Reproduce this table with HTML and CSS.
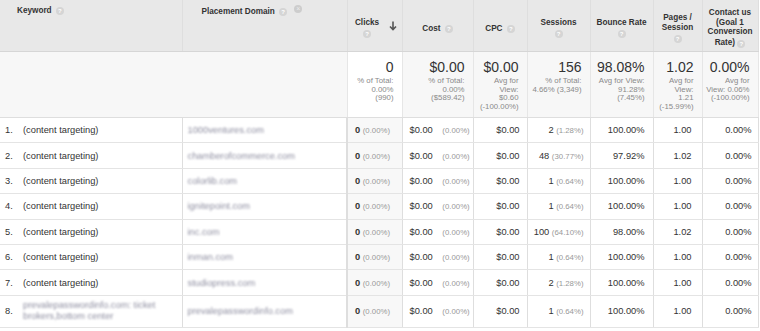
FILE: index.html
```html
<!DOCTYPE html>
<html>
<head>
<meta charset="utf-8">
<link rel="stylesheet" href="styles.css">
</head>
<body>
<table class="report">
  <colgroup>
    <col class="c-kw"><col class="c-dom"><col class="c-clicks"><col class="c-cost"><col class="c-cpc"><col class="c-sess"><col class="c-bounce"><col class="c-pages"><col class="c-conv">
  </colgroup>
  <thead>
    <tr class="head">
      <th class="dim kw">Keyword <span class="help">?</span></th>
      <th class="dim dom">Placement Domain <span class="help">?</span> <span class="remove">×</span></th>
      <th class="metric sorted">
        <div class="sortwrap">
          <div class="lbl">Clicks<br><span class="help">?</span></div>
          <svg class="arrow" width="8" height="10" viewBox="0 0 8 10"><path d="M4 0.5V8.5M1 5.5L4 8.5L7 5.5" fill="none" stroke="#555" stroke-width="1.6"/></svg>
        </div>
      </th>
      <th class="metric">Cost <span class="help">?</span></th>
      <th class="metric">CPC <span class="help">?</span></th>
      <th class="metric">Sessions<br><span class="help">?</span></th>
      <th class="metric">Bounce Rate<br><span class="help">?</span></th>
      <th class="metric">Pages /<br>Session<br><span class="help">?</span></th>
      <th class="metric">Contact us<br>(Goal 1<br>Conversion<br>Rate) <span class="help">?</span></th>
    </tr>
  </thead>
  <tbody>
    <tr class="summary">
      <td colspan="2"></td>
      <td class="sorted"><div class="big">0</div><div class="sub">% of Total:<br>0.00%<br>(990)</div></td>
      <td><div class="big">$0.00</div><div class="sub">% of Total:<br>0.00%<br>($589.42)</div></td>
      <td><div class="big">$0.00</div><div class="sub">Avg for<br>View:<br>$0.60<br>(-100.00%)</div></td>
      <td><div class="big">156</div><div class="sub">% of Total:<br>4.66% (3,349)</div></td>
      <td><div class="big">98.08%</div><div class="sub">Avg for View:<br>91.28%<br>(7.45%)</div></td>
      <td><div class="big">1.02</div><div class="sub">Avg for<br>View:<br>1.21<br>(-15.99%)</div></td>
      <td><div class="big">0.00%</div><div class="sub">Avg for<br>View: 0.06%<br>(-100.00%)</div></td>
    </tr>
    <tr class="row">
      <td class="kw"><span class="num">1.</span>(content targeting)</td>
      <td class="dom"><span class="blur">1000ventures.com</span></td>
      <td class="clicks"><b>0</b> <span class="pct">(0.00%)</span></td>
      <td class="cost">$0.00 <span class="pct">(0.00%)</span></td>
      <td class="r cpc">$0.00</td>
      <td class="r sess">2 <span class="pct">(1.28%)</span></td>
      <td class="r bounce">100.00%</td>
      <td class="r pages">1.00</td>
      <td class="r conv">0.00%</td>
    </tr>
    <tr class="row">
      <td class="kw"><span class="num">2.</span>(content targeting)</td>
      <td class="dom"><span class="blur">chamberofcommerce.com</span></td>
      <td class="clicks"><b>0</b> <span class="pct">(0.00%)</span></td>
      <td class="cost">$0.00 <span class="pct">(0.00%)</span></td>
      <td class="r cpc">$0.00</td>
      <td class="r sess">48 <span class="pct">(30.77%)</span></td>
      <td class="r bounce">97.92%</td>
      <td class="r pages">1.02</td>
      <td class="r conv">0.00%</td>
    </tr>
    <tr class="row">
      <td class="kw"><span class="num">3.</span>(content targeting)</td>
      <td class="dom"><span class="blur">colorlib.com</span></td>
      <td class="clicks"><b>0</b> <span class="pct">(0.00%)</span></td>
      <td class="cost">$0.00 <span class="pct">(0.00%)</span></td>
      <td class="r cpc">$0.00</td>
      <td class="r sess">1 <span class="pct">(0.64%)</span></td>
      <td class="r bounce">100.00%</td>
      <td class="r pages">1.00</td>
      <td class="r conv">0.00%</td>
    </tr>
    <tr class="row">
      <td class="kw"><span class="num">4.</span>(content targeting)</td>
      <td class="dom"><span class="blur">ignitepoint.com</span></td>
      <td class="clicks"><b>0</b> <span class="pct">(0.00%)</span></td>
      <td class="cost">$0.00 <span class="pct">(0.00%)</span></td>
      <td class="r cpc">$0.00</td>
      <td class="r sess">1 <span class="pct">(0.64%)</span></td>
      <td class="r bounce">100.00%</td>
      <td class="r pages">1.00</td>
      <td class="r conv">0.00%</td>
    </tr>
    <tr class="row">
      <td class="kw"><span class="num">5.</span>(content targeting)</td>
      <td class="dom"><span class="blur">inc.com</span></td>
      <td class="clicks"><b>0</b> <span class="pct">(0.00%)</span></td>
      <td class="cost">$0.00 <span class="pct">(0.00%)</span></td>
      <td class="r cpc">$0.00</td>
      <td class="r sess">100 <span class="pct">(64.10%)</span></td>
      <td class="r bounce">98.00%</td>
      <td class="r pages">1.02</td>
      <td class="r conv">0.00%</td>
    </tr>
    <tr class="row">
      <td class="kw"><span class="num">6.</span>(content targeting)</td>
      <td class="dom"><span class="blur">inman.com</span></td>
      <td class="clicks"><b>0</b> <span class="pct">(0.00%)</span></td>
      <td class="cost">$0.00 <span class="pct">(0.00%)</span></td>
      <td class="r cpc">$0.00</td>
      <td class="r sess">1 <span class="pct">(0.64%)</span></td>
      <td class="r bounce">100.00%</td>
      <td class="r pages">1.00</td>
      <td class="r conv">0.00%</td>
    </tr>
    <tr class="row">
      <td class="kw"><span class="num">7.</span>(content targeting)</td>
      <td class="dom"><span class="blur">studiopress.com</span></td>
      <td class="clicks"><b>0</b> <span class="pct">(0.00%)</span></td>
      <td class="cost">$0.00 <span class="pct">(0.00%)</span></td>
      <td class="r cpc">$0.00</td>
      <td class="r sess">2 <span class="pct">(1.28%)</span></td>
      <td class="r bounce">100.00%</td>
      <td class="r pages">1.00</td>
      <td class="r conv">0.00%</td>
    </tr>
    <tr class="row tall">
      <td class="kw"><div class="kwflex"><span class="num">8.</span><span class="blur two">prevalepasswordinfo.com: ticket<br>brokers,bottom center</span></div></td>
      <td class="dom"><span class="blur">prevalepasswordinfo.com</span></td>
      <td class="clicks"><b>0</b> <span class="pct">(0.00%)</span></td>
      <td class="cost">$0.00 <span class="pct">(0.00%)</span></td>
      <td class="r cpc">$0.00</td>
      <td class="r sess">1 <span class="pct">(0.64%)</span></td>
      <td class="r bounce">100.00%</td>
      <td class="r pages">1.00</td>
      <td class="r conv">0.00%</td>
    </tr>
  </tbody>
</table>
</body>
</html>
```
FILE: styles.css
```css
body {
  margin: 0;
  background: #fff;
  font-family: "Liberation Sans", Arial, sans-serif;
  color: #333;
}

.report {
  border-collapse: collapse;
  table-layout: fixed;
  width: 758px;
}

.c-kw { width: 182px; }
.c-dom { width: 165px; }
.c-clicks { width: 55px; }
.c-cost { width: 71px; }
.c-cpc { width: 54px; }
.c-sess { width: 63px; }
.c-bounce { width: 63px; }
.c-pages { width: 49px; }
.c-conv { width: 56px; }

th, td {
  border: 1px solid #dedede;
  padding: 0;
}

/* header */
.head th {
  background: #e8e8e8;
  height: 46px;
  font-size: 8.2px;
  line-height: 9.5px;
  font-weight: bold;
  color: #333;
  border-top: none;
  border-bottom: 1px solid #d6d6d6;
}
.head th:first-child { border-left: none; }

.head th.dim {
  text-align: left;
  vertical-align: top;
  padding-top: 5px;
}
.head th.kw { padding-left: 17px; }
.head th.dom { padding-left: 19px; }

.head th.metric {
  text-align: center;
  vertical-align: middle;
  padding: 5px 3px 0;
}

.sortwrap {
  display: flex;
  align-items: center;
  justify-content: center;
  gap: 10px;
  padding-left: 3px;
}
.sortwrap .lbl { text-align: center; }
.arrow { display: block; margin-top: -5px; }

.help {
  display: inline-block;
  width: 8px;
  height: 8px;
  border-radius: 50%;
  background: #d5d5d5;
  color: #fff;
  font-size: 6px;
  line-height: 8px;
  text-align: center;
  font-weight: bold;
  margin: 2px 0 1px 2px;
  vertical-align: middle;
}
.metric br + .help { margin: 3px 0 0 0; }

.remove {
  display: inline-block;
  width: 8px;
  height: 8px;
  border-radius: 50%;
  background: #cdcdcd;
  color: #ececec;
  font-size: 7px;
  line-height: 8px;
  text-align: center;
  font-weight: normal;
  margin-left: 5px;
  vertical-align: 3px;
}

/* summary */
.summary td {
  background: #f7f7f7;
  height: 58px;
  vertical-align: top;
  text-align: right;
  padding: 7px 8px 0 0;
  border-left-color: #e6e6e6;
  border-right-color: #e6e6e6;
}
.summary td:first-child { border-left: none; }
.summary td.sorted { background: #fff; }

.big {
  font-size: 14px;
  line-height: 16px;
  color: #333;
}
.sub {
  font-size: 7.8px;
  line-height: 8.5px;
  color: #8a8a8a;
  margin-top: 2px;
}

/* rows */
.row td {
  height: 24.4px;
  font-size: 9.3px;
  color: #333;
  white-space: nowrap;
  border-top: 1px solid #e4e4e4;
  border-bottom: 1px solid #e4e4e4;
  vertical-align: middle;
}
.row td:first-child { border-left: none; }
.row.tall td { height: 31px; }

.row .kw { padding-left: 5px; }
.num { display: inline-block; width: 18px; }
.kwflex { display: flex; align-items: center; }
.kwflex .num { flex: none; }

.row .dom { padding-left: 5px; }
.blur {
  color: #8e8ea0;
  filter: blur(1px);
}
.blur.two { line-height: 11px; display: inline-block; }

.row .clicks {
  background: #f8f8f8;
  padding-left: 7px;
  border-left: 2px solid #dedede;
}
.row .cost { padding-left: 7px; }
.row .cost .pct { margin-left: 7px; }

.pct {
  font-size: 7.8px;
  color: #999;
}

.row .r { text-align: right; }
.row .cpc { padding-right: 7px; }
.row .sess { padding-right: 6px; }
.row .bounce { padding-right: 8px; }
.row .pages { padding-right: 10px; }
.row .conv { padding-right: 6px; }
```
